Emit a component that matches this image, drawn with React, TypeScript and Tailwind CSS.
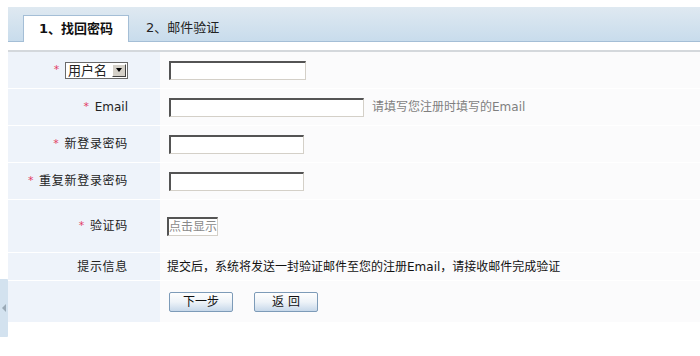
import React from "react";

const Star = () => <span className="text-[#e23a64] mr-[5px] text-[11px]">*</span>;

const Field = ({ w }: { w: number }) => (
  <input
    type="text"
    className="h-[19px] bg-white border-t-2 border-l-2 border-r border-b border-t-[#545454] border-l-[#545454] border-r-[#d4d0c8] border-b-[#d4d0c8] outline-none"
    style={{ width: w }}
  />
);

const Row = ({
  h,
  label,
  children,
}: {
  h: number;
  label: React.ReactNode;
  children: React.ReactNode;
}) => (
  <div className="flex border-b border-white" style={{ height: h }}>
    <div className="w-[152px] shrink-0 bg-[#eef3fa] flex items-center justify-end pr-[32px] text-[12px] tracking-[0.7px] text-[#222]">
      {label}
    </div>
    <div className="flex-1 bg-[#fbfbfc] flex items-center pl-[9px]">{children}</div>
  </div>
);

const Btn = ({ children }: { children: React.ReactNode }) => (
  <button className="w-[64px] h-[20px] rounded-[2px] border border-[#7d9bb8] bg-gradient-to-b from-[#fefefe] via-[#eef3f8] to-[#c7d8ea] text-[12px] text-[#111] leading-none">
    {children}
  </button>
);

export default function App() {
  return (
    <div className="relative w-[700px] h-[356px] bg-white pl-[8px] font-['DejaVu_Sans','Noto_Sans_CJK_SC',sans-serif] text-[12px] text-[#222]">
      {/* tabs header */}
      <div className="h-[7px]" />
      <div className="h-[35px] flex items-end pl-[15px] bg-gradient-to-b from-[#dfe9f1] to-[#c8dcec] border-b border-[#a4bed6]">
        <div className="w-[106px] h-[27px] -mb-px bg-white border border-b-0 border-[#a4bed6] flex items-center justify-center text-[13px] font-bold text-[#111]">
          1、找回密码
        </div>
        <div className="ml-[17px] h-[26px] flex items-center text-[13px] text-[#222]">2、邮件验证</div>
      </div>
      <div className="h-[8px]" />
      <div className="border-t-2 border-[#d4d8dc]">
        <Row
          h={37}
          label={
            <>
              <Star />
              <div className="flex items-center h-[17px] w-[63px] border border-[#6a6a6a] bg-white tracking-normal">
                <span className="flex-1 pl-[2px] text-[13px] leading-none">用户名</span>
                <span className="w-[14px] h-[13px] mr-px bg-[#d4d0c8] border border-t-white border-l-white border-r-[#404040] border-b-[#404040] flex items-center justify-center">
                  <span className="w-0 h-0 border-l-[3.5px] border-r-[3.5px] border-t-[4px] border-l-transparent border-r-transparent border-t-black" />
                </span>
              </div>
            </>
          }
        >
          <Field w={137} />
        </Row>
        <Row
          h={37}
          label={
            <>
              <Star />
              <span className="tracking-normal">Email</span>
            </>
          }
        >
          <Field w={195} />
          <span className="ml-[8px] text-[#7f7f7f]">请填写您注册时填写的Email</span>
        </Row>
        <Row
          h={37}
          label={
            <>
              <Star />
              新登录密码
            </>
          }
        >
          <Field w={135} />
        </Row>
        <Row
          h={37}
          label={
            <>
              <Star />
              重复新登录密码
            </>
          }
        >
          <Field w={135} />
        </Row>
        <Row
          h={53}
          label={
            <>
              <Star />
              验证码
            </>
          }
        >
          <div className="-ml-[2px] w-[51px] h-[19px] bg-white border-t-2 border-l-2 border-r border-b border-t-[#545454] border-l-[#545454] border-r-[#d4d0c8] border-b-[#d4d0c8] text-[12px] text-[#8a8a8a] leading-[16px] overflow-hidden whitespace-nowrap">
            点击显示
          </div>
        </Row>
        <Row h={28} label="提示信息">
          <span className="-ml-[2px] text-[#111]">提交后，系统将发送一封验证邮件至您的注册Email，请接收邮件完成验证</span>
        </Row>
        <Row h={42} label="">
          <div className="flex gap-[21px]">
            <Btn>下一步</Btn>
            <Btn>返 回</Btn>
          </div>
        </Row>
      </div>
      {/* side collapse handle */}
      <div className="absolute left-0 top-[279px] w-[8px] h-[58px] bg-[#d3e2ef] rounded-r-[1px] flex items-center justify-center">
        <span className="w-0 h-0 border-t-[4px] border-b-[4px] border-r-[4px] border-t-transparent border-b-transparent border-r-[#9aa9b6]" />
      </div>
    </div>
  );
}
